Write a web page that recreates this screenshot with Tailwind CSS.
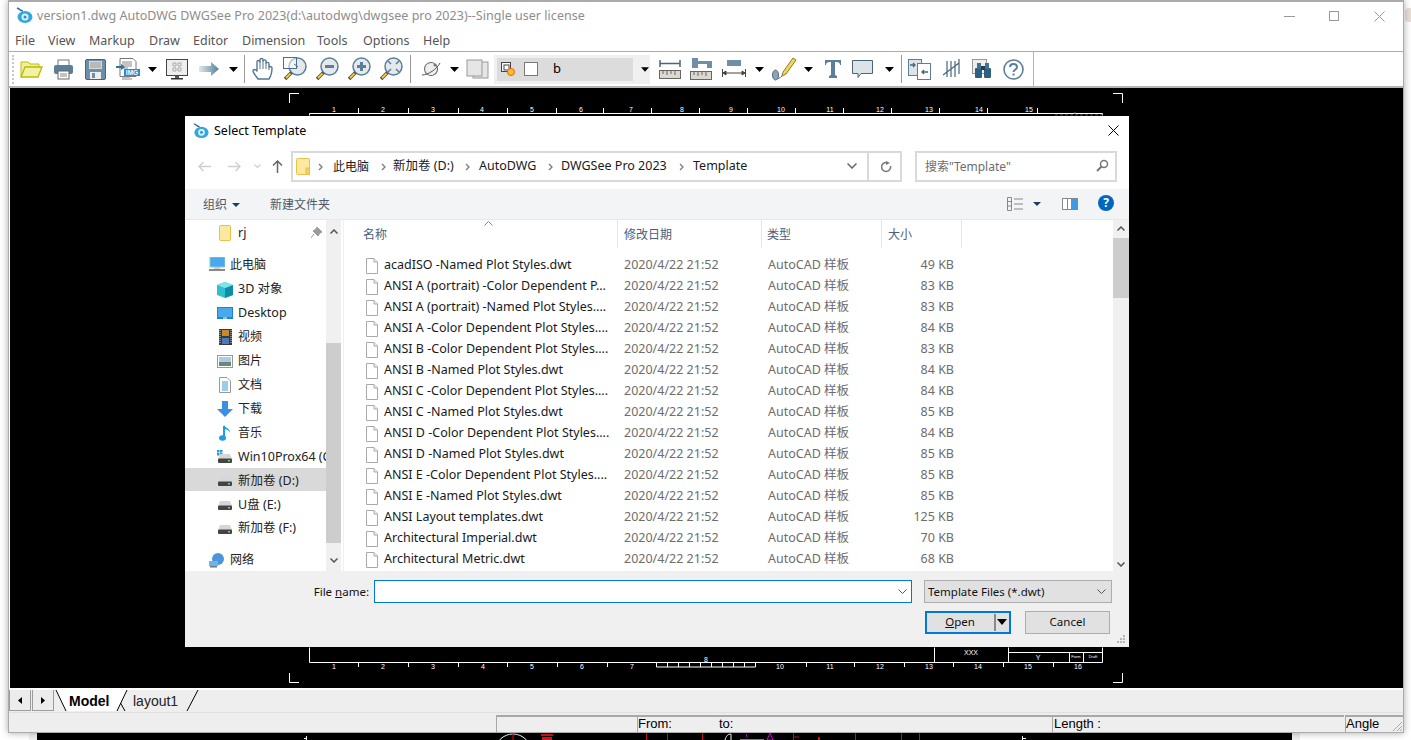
<!DOCTYPE html>
<html><head><meta charset="utf-8">
<script src="https://cdn.jsdelivr.net/npm/@tailwindcss/browser@4"></script>
</head>
<body class="m-0 bg-white">
<svg width="0" height="0" class="absolute">
<defs>
<symbol id="doc" viewBox="0 0 12 16"><path d="M.5.5h7.5l3.5 3.5v11.5h-11z" fill="#fff" stroke="#a9a9a9"/><path d="M8 .5v3.5h3.5" fill="#eee" stroke="#a9a9a9"/></symbol>
<symbol id="dd" viewBox="0 0 9 5"><path d="M0 0h9L4.500 5z" fill="#000"/></symbol>
<symbol id="drive" viewBox="0 0 16 12"><path d="M3 2h10l2 5H1z" fill="#d6d6d6"/><rect x="1" y="6.500" width="14" height="4.500" rx="1" fill="#444"/><rect x="11" y="8" width="2" height="1.500" fill="#5fe05f"/></symbol>
<symbol id="chev" viewBox="0 0 5 8"><path d="M1 1l3 3-3 3" fill="none" stroke="#7a7a7a" stroke-width="1.300"/></symbol>
<symbol id="lens" viewBox="0 0 24 24"><circle cx="14.500" cy="9.500" r="8.500" fill="#e4e8ea" stroke="#5b7f99" stroke-width="1.500"/><path d="M8.500 15.500L2 22" stroke="#555" stroke-width="3.500"/><path d="M7.500 16.500L3 21" stroke="#f0c93c" stroke-width="1.800"/></symbol>
</defs>
</svg>
<div class="relative w-[1411px] h-[740px] overflow-hidden bg-white font-['Noto_Sans','Noto_Sans_CJK_SC',sans-serif]">

  <!-- drawing behind the window -->
  <div class="absolute left-[29px] top-[725px] w-[1271px] h-[15px] bg-[#efefef]"></div>
  <svg class="absolute left-[37px] top-[725px]" width="1255" height="15" viewBox="37 725 1255 15">
    <rect x="37" y="725" width="1255" height="15" fill="#000"/>
    <path d="M304 738.500h3M306.500 736v4M1022.500 736v4M1022 738.500h4" stroke="#fff"/>
    <circle cx="513" cy="752" r="18" fill="none" stroke="#fff"/>
    <path d="M513 732v8" stroke="#f00"/>
    <rect x="541" y="734" width="12" height="2" fill="#d11"/><rect x="542" y="737" width="10" height="3" fill="#d11"/>
    <path d="M646.500 732v8M667.500 732v8M702.500 732v8M793.500 732v8M855.500 732v8M901.500 732v8M919.500 732v8" stroke="#c11"/>
    <path d="M725 740c1-4 3-6 6-6v6M740 740h24" stroke="#fff" fill="none"/>
    <path d="M746 734l1 3M770 733l-3 7 6 0z" stroke="#d0d" fill="none"/>
    <path d="M793 737h6" stroke="#c11"/><rect x="818" y="737" width="2" height="3" fill="#d11"/>
  </svg>
  <div class="absolute left-[1405px] top-[8px] w-[6px] h-[14px] bg-[#e9dfd4] rounded-l-sm"></div>

  <!-- application window -->
  <div class="relative ml-[8px] w-[1396px] h-[733px] flex flex-col bg-white border border-t-2 border-[#ababab] shadow-[0_0_7px_rgba(0,0,0,0.35)]">
    <!-- title bar -->
    <div class="h-[29px] flex items-center shrink-0 relative">
      <svg class="ml-[7px] mt-[-3px]" width="17" height="17" viewBox="0 0 17 17"><path d="M1 1c3 1 4 3 6 3" stroke="#2a6f9c" stroke-width="1.500" fill="none"/><ellipse cx="9" cy="10" rx="7.500" ry="6" fill="#35a7dc"/><circle cx="9" cy="10" r="3.500" fill="#d9f1fb"/><circle cx="9" cy="10" r="1.500" fill="#2b8fc4"/></svg>
      <span class="ml-[4px] text-[12.500px] text-[#8d8d8d] tracking-[0.03px] whitespace-nowrap mt-[-1px]">version1.dwg AutoDWG DWGSee Pro 2023(d:\autodwg\dwgsee pro 2023)--Single user license</span>
      <div class="ml-auto flex items-center mt-[-1px]">
        <div class="w-[11px] h-px bg-[#999] mr-[34px]"></div>
        <div class="w-[10px] h-[10px] border border-[#999] mr-[35px]"></div>
        <svg width="11" height="11" viewBox="0 0 11 11" class="mr-[18px]"><path d="M.5.500l10 10M10.500.500l-10 10" stroke="#999"/></svg>
      </div>
    </div>
    <!-- menu bar -->
    <div class="h-[22px] flex items-center shrink-0 pl-[6px] pt-[2px] text-[12.500px] text-[#555] border-b border-[#ababab] mt-[-1px]">
      <span class="w-[33px] shrink-0">File</span><span class="w-[41px] shrink-0">View</span><span class="w-[60px] shrink-0">Markup</span><span class="w-[44px] shrink-0">Draw</span><span class="w-[49px] shrink-0">Editor</span><span class="w-[75px] shrink-0">Dimension</span><span class="w-[46px] shrink-0">Tools</span><span class="w-[60px] shrink-0">Options</span><span>Help</span>
    </div>
    <!-- toolbar -->
    <div class="h-[36px] shrink-0 flex items-center bg-white border-b-2 border-[#b4b4b4] relative">
      <div class="absolute left-[3px] top-[3px] h-[29px] border-l-2 border-dotted border-[#c8c8c8]"></div>
      <svg class="ml-[11px] shrink-0" width="23" height="18" viewBox="0 0 23 18"><path d="M1 16V2h7l2 2h9v3" fill="#eef0a0" stroke="#bdbb00"/><path d="M1 17l4-10h17l-4 10z" fill="#f1f2a4" stroke="#bdbb00" stroke-width="1.300"/></svg>
      <svg class="ml-[10px] shrink-0" width="21" height="21" viewBox="0 0 21 21"><rect x="5" y="1" width="11" height="6" fill="#fff" stroke="#777"/><rect x="1" y="6" width="19" height="9" rx="2" fill="#5b7f99"/><rect x="5" y="12" width="11" height="8" fill="#fff" stroke="#666"/><path d="M7 15h7M7 17h7" stroke="#888"/></svg>
      <svg class="ml-[11px] shrink-0" width="21" height="21" viewBox="0 0 21 21"><rect x=".5" y=".5" width="20" height="20" rx="1.500" fill="#6d8fa8" stroke="#47657b"/><rect x="4" y="2" width="13" height="8" fill="#d9d9d9"/><path d="M5 4h11M5 6h11M5 8h11" stroke="#999"/><rect x="5" y="13" width="11" height="7" fill="#eee"/><rect x="7" y="14" width="3" height="5" fill="#6d8fa8"/></svg>
      <svg class="ml-[10px] shrink-0" width="24" height="23" viewBox="0 0 24 23"><path d="M4 .5h13l3 3v15H4z" fill="#fff" stroke="#777"/><path d="M6 4h10M6 6h10M6 8h10M6 10h6M6 19h8M6 21h10" stroke="#888"/><path d="M0 8h5V6l4 3-4 3v-2H0z" fill="#35709c"/><rect x="8" y="11" width="16" height="7" fill="#1d8be0"/><text x="16" y="17" font-size="6.500" font-family="Liberation Sans" font-weight="700" fill="#fff" text-anchor="middle">IMG</text></svg>
      <svg class="ml-[8px] shrink-0" width="9" height="5"><use href="#dd"/></svg>
      <svg class="ml-[9px] shrink-0" width="22" height="21" viewBox="0 0 22 21"><rect x=".5" y=".5" width="21" height="16" fill="#eee" stroke="#444"/><path d="M7 4h3v3H7zM12 4h3v3h-3zM7 9h3v3H7zM12 9h3v3h-3z" fill="none" stroke="#aaa"/><rect x="9" y="17" width="4" height="2" fill="#555"/><rect x="5" y="19" width="12" height="1.500" fill="#333"/></svg>
      <svg class="ml-[11px] shrink-0" width="20" height="14" viewBox="0 0 20 14"><defs><linearGradient id="ar"><stop offset="0" stop-color="#dfe7ec"/><stop offset="1" stop-color="#55819f"/></linearGradient></defs><path d="M0 4h12V0l8 7-8 7v-4H0z" fill="url(#ar)"/></svg>
      <svg class="ml-[10px] shrink-0" width="9" height="5"><use href="#dd"/></svg>
      <div class="ml-[6px] w-px h-[28px] bg-[#9a9a9a] shrink-0"></div>
      <svg class="ml-[7px] shrink-0" width="23" height="23" viewBox="0 0 23 23"><path d="M6 21c-2-3-5-6-5-8s2-2 4 0V4c0-2 2-2 3 0V2c0-2 3-2 3 0v1c1-2 3-1 3 0v2c1-1 3-1 3 1v3c1-1 3 0 3 1 0 4-1 8-3 11z" fill="#fff" stroke="#55778f" stroke-width="1.400" stroke-linejoin="round"/><path d="M8 4v7M11 3v8M14 5v6M17 8v4" stroke="#55778f"/></svg>
      <svg class="ml-[8px] shrink-0" width="24" height="24" viewBox="0 0 24 24"><use href="#lens"/><rect x=".5" y=".5" width="13" height="11" fill="#fff" fill-opacity=".5" stroke="#4d6e87"/><path d="M11 7l4 3" stroke="#4d6e87"/></svg>
      <svg class="ml-[8px] shrink-0" width="24" height="24" viewBox="0 0 24 24"><use href="#lens"/><rect x="10" y="8" width="9" height="3" fill="#5b7f99"/></svg>
      <svg class="ml-[8px] shrink-0" width="24" height="24" viewBox="0 0 24 24"><use href="#lens"/><path d="M10 8h3V5h3v3h3v3h-3v3h-3v-3h-3z" fill="#5b7f99"/></svg>
      <svg class="ml-[8px] shrink-0" width="24" height="24" viewBox="0 0 24 24"><use href="#lens"/><path d="M9 4l3 3M20 4l-3 3M9 15l3-3M20 15l-3-3" stroke="#5b7f99" stroke-width="1.500"/></svg>
      <div class="ml-[7px] w-px h-[28px] bg-[#9a9a9a] shrink-0"></div>
      <svg class="ml-[10px] shrink-0" width="20" height="18" viewBox="0 0 20 18"><ellipse cx="10" cy="9" rx="6.500" ry="6.500" fill="#eee" stroke="#666" transform="rotate(20 10 9)"/><path d="M1 15c6 0 15-6 18-12" stroke="#555" fill="none"/><circle cx="14" cy="5" r="1.500" fill="#777"/></svg>
      <svg class="ml-[9px] shrink-0" width="9" height="5"><use href="#dd"/></svg>
      <svg class="ml-[7px] shrink-0" width="23" height="20" viewBox="0 0 23 20"><rect x="7" y="3" width="15" height="16" fill="#e6e6e6" stroke="#999"/><rect x="1" y="1" width="15" height="16" fill="#e6e6e6" stroke="#999"/></svg>
      <!-- layer combo -->
      <div class="ml-[5px] w-[156px] h-[29px] shrink-0 bg-[#f0f0f0] p-[3px] flex gap-[2px]">
        <div class="w-[136px] bg-[#dcdcdc] flex items-center pl-[4px]">
          <svg width="15" height="15" viewBox="0 0 15 15" class="shrink-0"><rect x=".5" y=".5" width="9" height="9" fill="#fff" stroke="#444"/><rect x="3" y="3" width="5" height="5" fill="none" stroke="#444"/><circle cx="10" cy="10" r="3.500" fill="#ffc21a" stroke="#f25a1d"/></svg>
          <div class="ml-[8px] w-[14px] h-[14px] bg-white border border-[#777] shrink-0"></div>
          <span class="ml-[15px] text-[13px] text-black">b</span>
        </div>
        <div class="w-[12px] flex items-center justify-center"></div>
      </div>
      <svg class="absolute left-[632px] top-[15px]" width="8" height="5"><use href="#dd"/></svg>
      <svg class="ml-[9px] shrink-0" width="22" height="20" viewBox="0 0 22 20"><path d="M.5 4.500h21M1 1v7M21 1v7" stroke="#47657b" stroke-width="1.500"/><rect x=".5" y="11.500" width="21" height="8" fill="#d9d9d0" stroke="#666"/><path d="M4 12v3M8 12v4M12 12v3M16 12v4" stroke="#666"/></svg>
      <svg class="ml-[9px] shrink-0" width="22" height="22" viewBox="0 0 22 22"><path d="M2 0h6v3h14v7h-5V6H8v4H2z" fill="#6d8fa8"/><rect x=".5" y="13.500" width="21" height="8" fill="#d9d9d0" stroke="#666"/><path d="M4 14v3M8 14v4M12 14v3M16 14v4" stroke="#666"/></svg>
      <svg class="ml-[10px] shrink-0" width="24" height="18" viewBox="0 0 24 18"><rect x="5" y="0" width="14" height="6" fill="#6d8fa8"/><path d="M.5 9v8M23.500 9v8M1 13h22M1 13l3-2v4zM23 13l-3-2v4z" stroke="#444" fill="#444"/></svg>
      <svg class="ml-[9px] shrink-0" width="9" height="5"><use href="#dd"/></svg>
      <svg class="ml-[8px] shrink-0" width="25" height="24" viewBox="0 0 25 24"><path d="M11 15L21 1l3 2-10 14-4 2z" fill="#f0d75a" stroke="#8d7a2a"/><path d="M10 19c-2 2-4 3-6 3" stroke="#668" fill="none"/><ellipse cx="3.500" cy="18" rx="3" ry="5" fill="#8ba5b8" stroke="#567"/></svg>
      <svg class="ml-[7px] shrink-0" width="9" height="5"><use href="#dd"/></svg>
      <svg class="ml-[12px] shrink-0" width="16" height="18" viewBox="0 0 16 18"><path d="M0 0h16v5h-1c0-2-1-3-4-3h-1v13l2 1v2H4v-2l2-1V2H5C2 2 1 3 1 5H0z" fill="#5b7f99"/></svg>
      <svg class="ml-[11px] shrink-0" width="21" height="19" viewBox="0 0 21 19"><path d="M.5.500h20v13H9l-3 4v-4H.5z" fill="#dde4e8" stroke="#47657b"/></svg>
      <svg class="ml-[12px] shrink-0" width="9" height="5"><use href="#dd"/></svg>
      <div class="ml-[7px] w-px h-[28px] bg-[#9a9a9a] shrink-0"></div>
      <svg class="ml-[6px] shrink-0" width="23" height="21" viewBox="0 0 23 21"><rect x=".5" y=".5" width="13" height="16" fill="#dbe4ea" stroke="#5b7f99"/><rect x="9.500" y="4.500" width="13" height="16" fill="#fff" stroke="#5b7f99"/><path d="M2 6h5M5 4l2 2-2 2M20 13h-6M16 11l-2 2 2 2" stroke="#47657b" stroke-width="1.300" fill="none"/></svg>
      <svg class="ml-[12px] shrink-0" width="18" height="20" viewBox="0 0 18 20"><path d="M4 2v16M8 2v16M12 2v16M16 0v15M0 16L16 4" stroke="#47657b" stroke-width="1.200"/></svg>
      <svg class="ml-[11px] shrink-0" width="21" height="20" viewBox="0 0 21 20"><rect x=".5" y=".5" width="14" height="14" fill="#eee" stroke="#999"/><rect x="3" y="9" width="7" height="10" rx="1" fill="#2f5f80"/><rect x="12" y="9" width="7" height="10" rx="1" fill="#2f5f80"/><rect x="5" y="4" width="4" height="6" fill="#47708f"/><rect x="13" y="4" width="4" height="6" fill="#47708f"/><rect x="9" y="7" width="4" height="4" fill="#203f55"/></svg>
      <svg class="ml-[10px] shrink-0" width="21" height="21" viewBox="0 0 21 21"><circle cx="10.500" cy="10.500" r="9.500" fill="#fff" stroke="#5b7f99" stroke-width="1.600"/><path d="M7 8c0-4 7-4 7 0 0 3-3.500 2.500-3.500 5" fill="none" stroke="#5b7f99" stroke-width="2"/><rect x="9.500" y="14.500" width="2" height="2" fill="#5b7f99"/></svg>
      <div class="ml-[9px] w-px h-[35px] bg-[#b4b4b4] shrink-0"></div>
    </div>
    <!-- canvas -->
    <div class="relative flex-1 bg-black overflow-hidden ml-px">
      <svg class="absolute inset-0" width="1393" height="600" viewBox="10 88 1393 600">
        <g fill="none" stroke="#fff">
          <path d="M289.500 103V93.500H299M1113 93.500h9.500V103M289.500 673v9.500H299M1113 682.500h9.500V673"/>
          <path d="M309.500 116v-2.500H1102.500v3"/>
          <path d="M358.500 108v5M408.500 108v5M458.500 108v5M507.500 108v5M556.500 108v5M603.500 108v5M651.500 108v5M699.500 108v5M747.500 108v5M795.500 108v5M843.500 108v5M891.500 108v5M939.500 108v5M987.500 108v5M1037.500 108v5"/>
          <path d="M309.500 647v15.500H1102.500V647M934.500 647v15M1008.500 647v15M1008 652.500h95M1069.500 652v10M1083.500 652v10"/>
          <path d="M358.500 662v5M408.500 662v5M458.500 662v5M507.500 662v5M557.500 662v5M607.500 662v5M806.500 662v5M854.500 662v5M904.500 662v5M953.500 662v5M1003.500 662v5M1053.500 662v5"/>
          <path d="M656.500 662.500v4.500h99v-4.500M667.500 662v5M678.500 662v5M689.500 662v5M700.500 662v5M711.500 662v5M722.500 662v5M733.500 662v5M744.500 662v5"/>
        </g>
        <g fill="#fff" font-size="7" font-family="Liberation Sans" text-anchor="middle">
          <text x="334" y="112">1</text><text x="383" y="112">2</text><text x="433" y="112">3</text><text x="482" y="112">4</text><text x="532" y="112">5</text><text x="581" y="112">6</text><text x="631" y="112">7</text><text x="682" y="112">8</text><text x="731" y="112">9</text><text x="781" y="112">10</text><text x="830" y="112">11</text><text x="880" y="112">12</text><text x="929" y="112">13</text><text x="979" y="112">14</text><text x="1029" y="112">15</text>
          <text x="334" y="669">1</text><text x="383" y="669">2</text><text x="433" y="669">3</text><text x="483" y="669">4</text><text x="532" y="669">5</text><text x="582" y="669">6</text><text x="632" y="669">7</text><text x="706" y="662">8</text><text x="780" y="669">10</text><text x="830" y="669">11</text><text x="880" y="669">12</text><text x="929" y="669">13</text><text x="978" y="669">14</text><text x="1028" y="669">15</text><text x="1078" y="669">16</text>
          <text x="971" y="655">XXX</text><text x="1038" y="660">Y</text><text x="1076" y="658" font-size="4">Form</text><text x="1093" y="658" font-size="4">Draft</text>
        </g>
        <path d="M1055 115h48M1074 113h2" stroke="#777" stroke-dasharray="3 2"/>
      </svg>
    </div>
    <!-- tabs -->
    <div class="h-[24px] shrink-0 bg-[#eeeeee] border-t-2 border-white relative flex">
      <div class="w-[22px] h-[21px] bg-[#ececec] border border-[#9c9c9c] border-t-0 flex items-center justify-center"><svg width="4" height="7" viewBox="0 0 4 7"><path d="M4 0v7L0 3.500z" fill="#000"/></svg></div>
      <div class="ml-px w-[22px] h-[21px] bg-[#ececec] border border-[#9c9c9c] border-t-0 flex items-center justify-center"><svg width="4" height="7" viewBox="0 0 4 7"><path d="M0 0v7l4-3.500z" fill="#000"/></svg></div>
      <svg class="absolute left-[45px] top-0" width="150" height="22" viewBox="0 0 150 22"><path d="M2 0l10 21h51l10-21z" fill="#fff"/><path d="M2 0l10 21M73 0l-10 21M66.500 13l4.500 8M144 0l-11 21" stroke="#000" fill="none"/></svg>
      <span class="absolute left-[60px] top-[1px] text-[14px] font-bold text-black font-['Liberation_Sans',sans-serif] leading-[20px]">Model</span>
      <span class="absolute left-[124px] top-[1px] text-[14px] text-[#222] font-['Liberation_Sans',sans-serif] leading-[20px]">layout1</span>
    </div>
    <!-- status bar -->
    <div class="h-[20px] shrink-0 bg-[#eeeeee] border-t border-[#e0e0e0] flex text-[13px] text-black font-['Liberation_Sans',sans-serif] leading-[14px] pt-[2px] relative">
      <div class="ml-[487px] w-[141px] border-t-2 border-l border-[#a8a8a8]"></div>
      <div class="w-[415px] border-t-2 border-l border-[#a8a8a8] flex"><span class="w-[81px]">From:</span><span>to:</span></div>
      <div class="w-[292px] border-t-2 border-l border-[#a8a8a8] pl-px">Length :</div>
      <div class="ml-px flex-1 border-t-2 border-l border-[#a8a8a8]">Angle</div>
      <svg class="absolute right-0 bottom-0" width="12" height="12" viewBox="0 0 12 12"><path d="M11 2L2 11M11 6l-5 5M11 9l-2 2" stroke="#aaa"/></svg>
    </div>
  </div>

  <!-- dialog -->
  <div class="absolute left-[185px] top-[116px] w-[944px] h-[531px] bg-white flex flex-col text-[12.500px] text-[#1a1a1a] shadow-[0_0_0_1px_rgba(0,0,0,0.5)]">
    <div class="h-[30px] shrink-0 flex items-center pl-[8px] relative">
      <svg width="16" height="16" viewBox="0 0 17 17"><path d="M1 1c3 1 4 3 6 3" stroke="#2a6f9c" stroke-width="1.500" fill="none"/><ellipse cx="9" cy="10" rx="7.500" ry="6" fill="#35a7dc"/><circle cx="9" cy="10" r="3.500" fill="#d9f1fb"/><circle cx="9" cy="10" r="1.500" fill="#2b8fc4"/></svg>
      <span class="ml-[5px] text-black">Select Template</span>
      <svg class="absolute right-[10px] top-[9px]" width="11" height="11" viewBox="0 0 11 11"><path d="M.5.500l10 10M10.500.500l-10 10" stroke="#000"/></svg>
    </div>
    <!-- address row -->
    <div class="h-[43px] shrink-0 flex items-start pt-[5px] relative">
      <div class="w-[106px] h-[31px] flex items-center shrink-0">
        <svg class="ml-[13px]" width="13" height="11" viewBox="0 0 13 11"><path d="M13 5.500H1M5.500 1L1 5.500 5.500 10" fill="none" stroke="#cfcfcf" stroke-width="1.400"/></svg>
        <svg class="ml-[17px]" width="13" height="11" viewBox="0 0 13 11"><path d="M0 5.500h12M7.500 1L12 5.500 7.500 10" fill="none" stroke="#cfcfcf" stroke-width="1.400"/></svg>
        <svg class="ml-[13px]" width="7" height="5" viewBox="0 0 7 5"><path d="M.5.500l3 3 3-3" fill="none" stroke="#cfcfcf" stroke-width="1.200"/></svg>
        <svg class="ml-[11px]" width="11" height="13" viewBox="0 0 11 13"><path d="M5.500 13V1M1 5.500L5.500 1 10 5.500" fill="none" stroke="#666" stroke-width="1.500"/></svg>
      </div>
      <div class="w-[611px] h-[31px] border-2 border-[#d9d9d9] flex items-center shrink-0 bg-white">
        <svg class="ml-[3px] shrink-0" width="14" height="17" viewBox="0 0 14 17"><rect x=".5" y=".5" width="13" height="16" rx="1" fill="#fde8a0" stroke="#e8c14a"/><rect x="10" y="10" width="3.500" height="6.500" fill="#f5d061" stroke="#e8c14a"/></svg>
        <span class="ml-[8px] w-[15px] shrink-0"><svg width="5" height="8"><use href="#chev"/></svg></span>
        <span class="w-[48px] shrink-0 text-[12px]">此电脑</span><span class="w-[12px] shrink-0"><svg width="5" height="8"><use href="#chev"/></svg></span>
        <span class="w-[72px] shrink-0">新加卷 (D:)</span><span class="w-[14px] shrink-0"><svg width="5" height="8"><use href="#chev"/></svg></span>
        <span class="w-[69px] shrink-0">AutoDWG</span><span class="w-[13px] shrink-0"><svg width="5" height="8"><use href="#chev"/></svg></span>
        <span class="w-[118px] shrink-0">DWGSee Pro 2023</span><span class="w-[14px] shrink-0"><svg width="5" height="8"><use href="#chev"/></svg></span>
        <span class="shrink-0">Template</span>
        <svg class="absolute left-[662px] top-[17px]" width="10" height="6" viewBox="0 0 10 6"><path d="M.5.500L5 5 9.500.500" fill="none" stroke="#666" stroke-width="1.500"/></svg>
        <div class="absolute left-[682px] top-[5px] w-[2px] h-[31px] bg-[#d9d9d9]"></div>
        <svg class="absolute left-[696px] top-[15px]" width="11" height="12" viewBox="0 0 11 12"><path d="M9.500 5A4.500 4.500 0 1 1 6 1.600" fill="none" stroke="#777" stroke-width="1.500"/><path d="M5 0l4 2-4 2z" fill="#777"/></svg>
      </div>
      <div class="ml-[13px] w-[202px] h-[31px] border-2 border-[#d9d9d9] flex items-center pl-[8px] text-[12px] text-[#6d6d6d] shrink-0 relative">搜索"Template"
        <svg class="absolute right-[6px] top-[6px]" width="13" height="13" viewBox="0 0 13 13"><circle cx="8" cy="5" r="3.500" fill="none" stroke="#777" stroke-width="1.500"/><path d="M5.500 7.500L1 12" stroke="#777" stroke-width="2"/></svg>
      </div>
    </div>
    <!-- command bar -->
    <div class="h-[31px] shrink-0 bg-[#f3f4f6] flex items-center pl-[18px] pt-[2px] text-[12px] text-[#4a5a6c] border-b border-[#e8e8e8] relative">
      <span class="w-[29px]">组织</span>
      <svg width="8" height="4" viewBox="0 0 8 4"><path d="M0 0h8L4 4z" fill="#1f3a5f"/></svg>
      <span class="ml-[30px]">新建文件夹</span>
      <svg class="absolute left-[822px] top-[8px]" width="16" height="14" viewBox="0 0 16 14"><path d="M.5.500h4v13h-4zM.5 4.500h4M.5 9h4M7 2h9M7 7h9M7 12h9" fill="none" stroke="#888"/></svg>
      <svg class="absolute left-[848px] top-[13px]" width="8" height="4" viewBox="0 0 8 4"><path d="M0 0h8L4 4z" fill="#1f3a5f"/></svg>
      <svg class="absolute left-[877px] top-[9px]" width="16" height="12" viewBox="0 0 16 12"><rect x=".5" y=".5" width="15" height="11" fill="#fff" stroke="#888"/><rect x="9" y="1" width="6" height="10" fill="#3f9ae8"/><path d="M5.500 1v10" stroke="#888"/></svg>
      <div class="absolute left-[913px] top-[6px] w-[16px] h-[16px] rounded-full bg-[#0067c0] text-white text-[12px] font-bold flex items-center justify-center leading-none">?</div>
    </div>
    <!-- main -->
    <div class="flex-1 min-h-0 flex">
      <!-- sidebar -->
      <div class="w-[141px] shrink-0 overflow-hidden flex flex-col whitespace-nowrap text-[#222]">
        <div class="h-[24px] mt-px flex items-center pl-[34px] relative"><svg width="12" height="16" viewBox="0 0 12 16"><rect x=".5" y=".5" width="11" height="15" rx="1" fill="#fde8a0" stroke="#e8c14a"/></svg><span class="ml-[7px]">rj</span><svg class="absolute left-[126px] top-[6px]" width="11" height="11" viewBox="0 0 11 11"><path d="M6 0l5 5-2 1-2 3-5-5 3-2zM3 7l-3 4" fill="#9c9c9c" stroke="#9c9c9c"/></svg></div>
        <div class="h-[8px]"></div>
        <div class="h-[24px] flex items-center pl-[24px]"><svg class="shrink-0" width="16" height="15" viewBox="0 0 16 15"><rect x="1" y="0" width="15" height="10" fill="#4aa8ec" stroke="#8cc"/><rect x="5" y="10" width="6" height="2" fill="#ccc"/><rect x="0" y="12" width="16" height="2" fill="#888"/></svg><span class="ml-[5px] text-[12px]">此电脑</span></div>
        <div class="h-[24px] flex items-center pl-[32px] pt-[2px]"><svg class="shrink-0" width="16" height="16" viewBox="0 0 16 16"><path d="M8 0l8 3v10l-8 3-8-3V3z" fill="#2fc0cf"/><path d="M8 6l8-3v10l-8 3z" fill="#0c8ea8"/><path d="M8 6L0 3l8-3 8 3z" fill="#7fe3ea"/></svg><span class="ml-[5px]">3D 对象</span></div>
        <div class="h-[24px] flex items-center pl-[32px] pt-[2px]"><svg class="shrink-0" width="16" height="12" viewBox="0 0 16 12"><rect width="16" height="12" fill="#1a84d9"/><rect x="1" y="1" width="14" height="9" fill="#4aa8ec"/><path d="M6 11h4" stroke="#fff"/></svg><span class="ml-[5px]">Desktop</span></div>
        <div class="h-[24px] flex items-center pl-[34px] pt-[2px]"><svg class="shrink-0" width="13" height="16" viewBox="0 0 13 16"><rect width="13" height="16" fill="#3a3a3a"/><rect x="3" y="1" width="7" height="6" fill="#c88b2c"/><rect x="3" y="9" width="7" height="6" fill="#4a7ac0"/><path d="M1 1v14M12 1v14" stroke="#ccc" stroke-dasharray="1 1"/></svg><span class="ml-[6px] text-[12px]">视频</span></div>
        <div class="h-[24px] flex items-center pl-[32px] pt-[2px]"><svg class="shrink-0" width="16" height="13" viewBox="0 0 16 13"><rect x=".5" y=".5" width="15" height="12" fill="#fff" stroke="#999"/><rect x="2" y="2" width="12" height="5" fill="#a9cde8"/><rect x="2" y="7" width="12" height="4" fill="#6b8a73"/></svg><span class="ml-[5px] text-[12px]">图片</span></div>
        <div class="h-[24px] flex items-center pl-[34px] pt-[2px]"><svg class="shrink-0" width="12" height="16" viewBox="0 0 12 16"><path d="M.5.500h7.500l3.500 3.500v11.500h-11z" fill="#fff" stroke="#999"/><path d="M3 5h6M3 7h6M3 9h6M3 11h6M3 13h6" stroke="#3a9ad9"/></svg><span class="ml-[7px] text-[12px]">文档</span></div>
        <div class="h-[24px] flex items-center pl-[32px] pt-[2px]"><svg class="shrink-0" width="16" height="16" viewBox="0 0 16 16"><path d="M5 0h6v8h5l-8 8-8-8h5z" fill="#3d8fe0"/></svg><span class="ml-[5px] text-[12px]">下载</span></div>
        <div class="h-[24px] flex items-center pl-[34px] pt-[2px]"><svg class="shrink-0" width="12" height="16" viewBox="0 0 12 16"><path d="M5 1v11" stroke="#1a9ee8" stroke-width="2"/><ellipse cx="3.500" cy="13" rx="3.500" ry="2.800" fill="#1a9ee8"/><path d="M5 0c1 3 6 3 6 8-1-3-4-4-6-4z" fill="#1a9ee8"/></svg><span class="ml-[7px] text-[12px]">音乐</span></div>
        <div class="h-[24px] flex items-center pl-[32px] pt-[3px]"><svg class="shrink-0" width="16" height="14" viewBox="0 0 16 14"><path d="M0 0h2.500v2.500H0zM3 0h2.500v2.500H3zM0 3h2.500v2.500H0zM3 3h2.500v2.500H3z" fill="#1ba1e2"/><use href="#drive" x="0" y="2" width="16" height="12"/></svg><span class="ml-[5px]">Win10Prox64 (C</span></div>
        <div class="h-[24px] flex items-center pl-[32px] pt-[3px] bg-[#d9d9d9]"><svg class="shrink-0" width="16" height="12"><use href="#drive"/></svg><span class="ml-[5px]">新加卷 (D:)</span></div>
        <div class="h-[24px] flex items-center pl-[32px] pt-[3px]"><svg class="shrink-0" width="16" height="12"><use href="#drive"/></svg><span class="ml-[5px]">U盘 (E:)</span></div>
        <div class="h-[24px] flex items-center pl-[32px] pt-[3px]"><svg class="shrink-0" width="16" height="12"><use href="#drive"/></svg><span class="ml-[5px]">新加卷 (F:)</span></div>
        <div class="h-[8px]"></div>
        <div class="h-[24px] flex items-center pl-[24px] pt-[2px]"><svg class="shrink-0" width="16" height="15" viewBox="0 0 16 15"><circle cx="9" cy="6" r="6" fill="#4a96d9"/><rect y="8" width="9" height="5" fill="#6fb3e8"/><rect x="1" y="13" width="7" height="1.500" fill="#777"/></svg><span class="ml-[5px] text-[12px]">网络</span></div>
      </div>
      <!-- sidebar scrollbar -->
      <div class="w-[15px] shrink-0 bg-[#f0f0f0] relative">
        <svg class="absolute left-[4px] top-[9px]" width="8" height="5" viewBox="0 0 8 5"><path d="M.5 4.500L4 1l3.500 3.500" fill="none" stroke="#555" stroke-width="1.500"/></svg>
        <div class="absolute left-0 top-[123px] w-full h-[200px] bg-[#cdcdcd]"></div>
        <svg class="absolute left-[4px] bottom-[8px]" width="8" height="5" viewBox="0 0 8 5"><path d="M.5.500L4 4 7.500.500" fill="none" stroke="#555" stroke-width="1.500"/></svg>
      </div>
      <!-- list -->
      <div class="flex-1 min-w-0 flex flex-col ml-[2px] border-l border-[#f0f0f0] relative whitespace-nowrap">
        <svg class="absolute left-[140px] top-[1px]" width="9" height="5" viewBox="0 0 9 5"><path d="M.5 4.500L4.500.500l4 4" fill="none" stroke="#888"/></svg>
        <div class="h-[28px] shrink-0 flex text-[12px] text-[#4c607a] mb-[7px]">
          <div class="w-[274px] pl-[19px] pt-[2px] border-r border-[#e5e5e5] flex items-center">名称</div>
          <div class="w-[144px] pl-[6px] pt-[2px] border-r border-[#e5e5e5] flex items-center">修改日期</div>
          <div class="w-[120px] pl-[5px] pt-[2px] border-r border-[#e5e5e5] flex items-center">类型</div>
          <div class="w-[80px] pl-[6px] pt-[2px] border-r border-[#e5e5e5] flex items-center">大小</div>
        </div>
        <div class="flex items-center h-[21px]"><svg class="ml-[22px] shrink-0" width="12" height="16"><use href="#doc"/></svg><span class="ml-[6px] w-[240px] shrink-0">acadISO -Named Plot Styles.dwt</span><span class="w-[144px] shrink-0 text-[#6d6d6d]">2020/4/22 21:52</span><span class="w-[120px] shrink-0 text-[#6d6d6d]">AutoCAD 样板</span><span class="w-[66px] shrink-0 text-right text-[#6d6d6d]">49 KB</span></div>
        <div class="flex items-center h-[21px]"><svg class="ml-[22px] shrink-0" width="12" height="16"><use href="#doc"/></svg><span class="ml-[6px] w-[240px] shrink-0">ANSI A (portrait) -Color Dependent P...</span><span class="w-[144px] shrink-0 text-[#6d6d6d]">2020/4/22 21:52</span><span class="w-[120px] shrink-0 text-[#6d6d6d]">AutoCAD 样板</span><span class="w-[66px] shrink-0 text-right text-[#6d6d6d]">83 KB</span></div>
        <div class="flex items-center h-[21px]"><svg class="ml-[22px] shrink-0" width="12" height="16"><use href="#doc"/></svg><span class="ml-[6px] w-[240px] shrink-0">ANSI A (portrait) -Named Plot Styles....</span><span class="w-[144px] shrink-0 text-[#6d6d6d]">2020/4/22 21:52</span><span class="w-[120px] shrink-0 text-[#6d6d6d]">AutoCAD 样板</span><span class="w-[66px] shrink-0 text-right text-[#6d6d6d]">83 KB</span></div>
        <div class="flex items-center h-[21px]"><svg class="ml-[22px] shrink-0" width="12" height="16"><use href="#doc"/></svg><span class="ml-[6px] w-[240px] shrink-0">ANSI A -Color Dependent Plot Styles....</span><span class="w-[144px] shrink-0 text-[#6d6d6d]">2020/4/22 21:52</span><span class="w-[120px] shrink-0 text-[#6d6d6d]">AutoCAD 样板</span><span class="w-[66px] shrink-0 text-right text-[#6d6d6d]">84 KB</span></div>
        <div class="flex items-center h-[21px]"><svg class="ml-[22px] shrink-0" width="12" height="16"><use href="#doc"/></svg><span class="ml-[6px] w-[240px] shrink-0">ANSI B -Color Dependent Plot Styles....</span><span class="w-[144px] shrink-0 text-[#6d6d6d]">2020/4/22 21:52</span><span class="w-[120px] shrink-0 text-[#6d6d6d]">AutoCAD 样板</span><span class="w-[66px] shrink-0 text-right text-[#6d6d6d]">83 KB</span></div>
        <div class="flex items-center h-[21px]"><svg class="ml-[22px] shrink-0" width="12" height="16"><use href="#doc"/></svg><span class="ml-[6px] w-[240px] shrink-0">ANSI B -Named Plot Styles.dwt</span><span class="w-[144px] shrink-0 text-[#6d6d6d]">2020/4/22 21:52</span><span class="w-[120px] shrink-0 text-[#6d6d6d]">AutoCAD 样板</span><span class="w-[66px] shrink-0 text-right text-[#6d6d6d]">84 KB</span></div>
        <div class="flex items-center h-[21px]"><svg class="ml-[22px] shrink-0" width="12" height="16"><use href="#doc"/></svg><span class="ml-[6px] w-[240px] shrink-0">ANSI C -Color Dependent Plot Styles....</span><span class="w-[144px] shrink-0 text-[#6d6d6d]">2020/4/22 21:52</span><span class="w-[120px] shrink-0 text-[#6d6d6d]">AutoCAD 样板</span><span class="w-[66px] shrink-0 text-right text-[#6d6d6d]">84 KB</span></div>
        <div class="flex items-center h-[21px]"><svg class="ml-[22px] shrink-0" width="12" height="16"><use href="#doc"/></svg><span class="ml-[6px] w-[240px] shrink-0">ANSI C -Named Plot Styles.dwt</span><span class="w-[144px] shrink-0 text-[#6d6d6d]">2020/4/22 21:52</span><span class="w-[120px] shrink-0 text-[#6d6d6d]">AutoCAD 样板</span><span class="w-[66px] shrink-0 text-right text-[#6d6d6d]">85 KB</span></div>
        <div class="flex items-center h-[21px]"><svg class="ml-[22px] shrink-0" width="12" height="16"><use href="#doc"/></svg><span class="ml-[6px] w-[240px] shrink-0">ANSI D -Color Dependent Plot Styles....</span><span class="w-[144px] shrink-0 text-[#6d6d6d]">2020/4/22 21:52</span><span class="w-[120px] shrink-0 text-[#6d6d6d]">AutoCAD 样板</span><span class="w-[66px] shrink-0 text-right text-[#6d6d6d]">84 KB</span></div>
        <div class="flex items-center h-[21px]"><svg class="ml-[22px] shrink-0" width="12" height="16"><use href="#doc"/></svg><span class="ml-[6px] w-[240px] shrink-0">ANSI D -Named Plot Styles.dwt</span><span class="w-[144px] shrink-0 text-[#6d6d6d]">2020/4/22 21:52</span><span class="w-[120px] shrink-0 text-[#6d6d6d]">AutoCAD 样板</span><span class="w-[66px] shrink-0 text-right text-[#6d6d6d]">85 KB</span></div>
        <div class="flex items-center h-[21px]"><svg class="ml-[22px] shrink-0" width="12" height="16"><use href="#doc"/></svg><span class="ml-[6px] w-[240px] shrink-0">ANSI E -Color Dependent Plot Styles....</span><span class="w-[144px] shrink-0 text-[#6d6d6d]">2020/4/22 21:52</span><span class="w-[120px] shrink-0 text-[#6d6d6d]">AutoCAD 样板</span><span class="w-[66px] shrink-0 text-right text-[#6d6d6d]">85 KB</span></div>
        <div class="flex items-center h-[21px]"><svg class="ml-[22px] shrink-0" width="12" height="16"><use href="#doc"/></svg><span class="ml-[6px] w-[240px] shrink-0">ANSI E -Named Plot Styles.dwt</span><span class="w-[144px] shrink-0 text-[#6d6d6d]">2020/4/22 21:52</span><span class="w-[120px] shrink-0 text-[#6d6d6d]">AutoCAD 样板</span><span class="w-[66px] shrink-0 text-right text-[#6d6d6d]">85 KB</span></div>
        <div class="flex items-center h-[21px]"><svg class="ml-[22px] shrink-0" width="12" height="16"><use href="#doc"/></svg><span class="ml-[6px] w-[240px] shrink-0">ANSI Layout templates.dwt</span><span class="w-[144px] shrink-0 text-[#6d6d6d]">2020/4/22 21:52</span><span class="w-[120px] shrink-0 text-[#6d6d6d]">AutoCAD 样板</span><span class="w-[66px] shrink-0 text-right text-[#6d6d6d]">125 KB</span></div>
        <div class="flex items-center h-[21px]"><svg class="ml-[22px] shrink-0" width="12" height="16"><use href="#doc"/></svg><span class="ml-[6px] w-[240px] shrink-0">Architectural Imperial.dwt</span><span class="w-[144px] shrink-0 text-[#6d6d6d]">2020/4/22 21:52</span><span class="w-[120px] shrink-0 text-[#6d6d6d]">AutoCAD 样板</span><span class="w-[66px] shrink-0 text-right text-[#6d6d6d]">70 KB</span></div>
        <div class="flex items-center h-[21px]"><svg class="ml-[22px] shrink-0" width="12" height="16"><use href="#doc"/></svg><span class="ml-[6px] w-[240px] shrink-0">Architectural Metric.dwt</span><span class="w-[144px] shrink-0 text-[#6d6d6d]">2020/4/22 21:52</span><span class="w-[120px] shrink-0 text-[#6d6d6d]">AutoCAD 样板</span><span class="w-[66px] shrink-0 text-right text-[#6d6d6d]">68 KB</span></div>
      </div>
      <!-- list scrollbar -->
      <div class="w-[16px] shrink-0 bg-[#f0f0f0] relative">
        <svg class="absolute left-[4px] top-[6px]" width="8" height="5" viewBox="0 0 8 5"><path d="M.5 4.500L4 1l3.500 3.500" fill="none" stroke="#555" stroke-width="1.500"/></svg>
        <div class="absolute left-0 top-[18px] w-full h-[60px] bg-[#cdcdcd]"></div>
        <svg class="absolute left-[4px] bottom-[4px]" width="8" height="5" viewBox="0 0 8 5"><path d="M.5.500L4 4 7.500.500" fill="none" stroke="#555" stroke-width="1.500"/></svg>
      </div>
    </div>
    <!-- footer -->
    <div class="h-[76px] shrink-0 bg-[#f0f0f0] relative text-[11.500px] text-[#111]">
      <div class="flex items-center pt-[9px]">
        <span class="w-[184px] text-right">File <span class="underline">n</span>ame:</span>
        <div class="ml-[5px] w-[538px] h-[23px] bg-white border border-[#0078d7] relative"><svg class="absolute right-[4px] top-[8px]" width="9" height="5" viewBox="0 0 9 5"><path d="M.5.500l4 4 4-4" fill="none" stroke="#555"/></svg></div>
        <div class="ml-[12px] w-[188px] h-[23px] bg-[#e1e1e1] border border-[#adadad] pl-[3px] flex items-center relative">Template Files (*.dwt)<svg class="absolute right-[5px] top-[8px]" width="9" height="5" viewBox="0 0 9 5"><path d="M.5.500l4 4 4-4" fill="none" stroke="#555"/></svg></div>
      </div>
      <div class="flex pt-[8px] pl-[740px]">
        <div class="w-[86px] h-[23px] bg-[#e1e1e1] border-2 border-[#0078d7] flex items-center relative pb-[2px]"><span class="w-[66px] text-center"><span class="underline">O</span>pen</span><div class="absolute left-[67px] top-[1px] bottom-[1px] w-[2px] bg-[#8a8a8a]"></div><svg class="absolute left-[70px] top-[6px]" width="10" height="6" viewBox="0 0 10 6"><path d="M0 0h10L5 6z" fill="#000"/></svg></div>
        <div class="ml-[14px] w-[85px] h-[23px] bg-[#e1e1e1] border border-[#adadad] flex items-center justify-center pb-[2px]">Cancel</div>
      </div>
      <svg class="absolute right-[3px] bottom-[3px]" width="9" height="9" viewBox="0 0 9 9"><path d="M6 0h2v2H6zM3 3h2v2H3zM6 3h2v2H6zM0 6h2v2H0zM3 6h2v2H3zM6 6h2v2H6z" fill="#b5b5b5"/></svg>
    </div>
  </div>
</div>
</body></html>
